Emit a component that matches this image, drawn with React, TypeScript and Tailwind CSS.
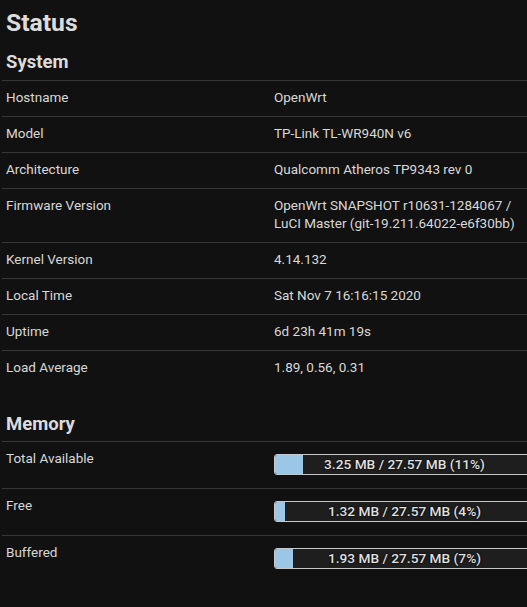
import React from "react";

const rows: [string, string[]][] = [
  ["Hostname", ["OpenWrt"]],
  ["Model", ["TP-Link TL-WR940N v6"]],
  ["Architecture", ["Qualcomm Atheros TP9343 rev 0"]],
  ["Firmware Version", ["OpenWrt SNAPSHOT r10631-1284067 /", "LuCI Master (git-19.211.64022-e6f30bb)"]],
  ["Kernel Version", ["4.14.132"]],
  ["Local Time", ["Sat Nov 7 16:16:15 2020"]],
  ["Uptime", ["6d 23h 41m 19s"]],
  ["Load Average", ["1.89, 0.56, 0.31"]],
];

const mem: [string, string, number][] = [
  ["Total Available", "3.25 MB / 27.57 MB (11%)", 11],
  ["Free", "1.32 MB / 27.57 MB (4%)", 4],
  ["Buffered", "1.93 MB / 27.57 MB (7%)", 7],
];

export default function App() {
  return (
    <div
      className="w-full min-h-[607px] overflow-hidden bg-[#111111] text-[#d8d8d8]"
      style={{ fontFamily: "Roboto, 'Liberation Sans', sans-serif" }}
    >
      <div className="w-[545px] pl-[2px]">
        <h1 className="mt-[8px] pl-[4px] text-[24.7px] leading-[30px] font-bold text-[#dcdcdc]">Status</h1>
        <h2 className="mt-[12px] mb-[6px] pl-[4px] text-[18.5px] leading-[24px] font-bold text-[#dcdcdc]">System</h2>
        <div>
          {rows.map(([k, v]) => (
            <div key={k} className="flex border-t border-[#363636] pt-[7px] pb-[10px] text-[13.5px] leading-[18px]">
              <div className="w-[268px] pl-[4px]">{k}</div>
              <div className="flex-1 pl-[4px]">
                {v.map((line) => (
                  <div key={line}>{line}</div>
                ))}
              </div>
            </div>
          ))}
        </div>
        <h2 className="mt-[26px] mb-[5px] pl-[4px] text-[18.5px] leading-[24px] font-bold text-[#dcdcdc]">Memory</h2>
        <div>
          {mem.map(([k, v, p]) => (
            <div key={k} className="flex border-t border-[#363636] text-[13.5px] leading-[18px]">
              <div className="w-[268px] pl-[4px] pt-[7px]">{k}</div>
              <div className="flex-1 pl-[4px] pr-[4px] pt-[12px] pb-[13px]">
                <div className="relative h-[21px] w-[261px] overflow-hidden rounded-[3px] border border-[#c8c8c8] bg-[#1e1e1e]">
                  <div className="absolute left-0 top-0 h-full bg-[#9cc6e6]" style={{ width: `${p}%` }} />
                  <div className="relative text-center text-[13.7px] leading-[19px] font-medium text-[#e0e0e0] [text-shadow:0_0_2px_#000,0_0_1px_#000]">
                    {v}
                  </div>
                </div>
              </div>
            </div>
          ))}
        </div>
      </div>
    </div>
  );
}
